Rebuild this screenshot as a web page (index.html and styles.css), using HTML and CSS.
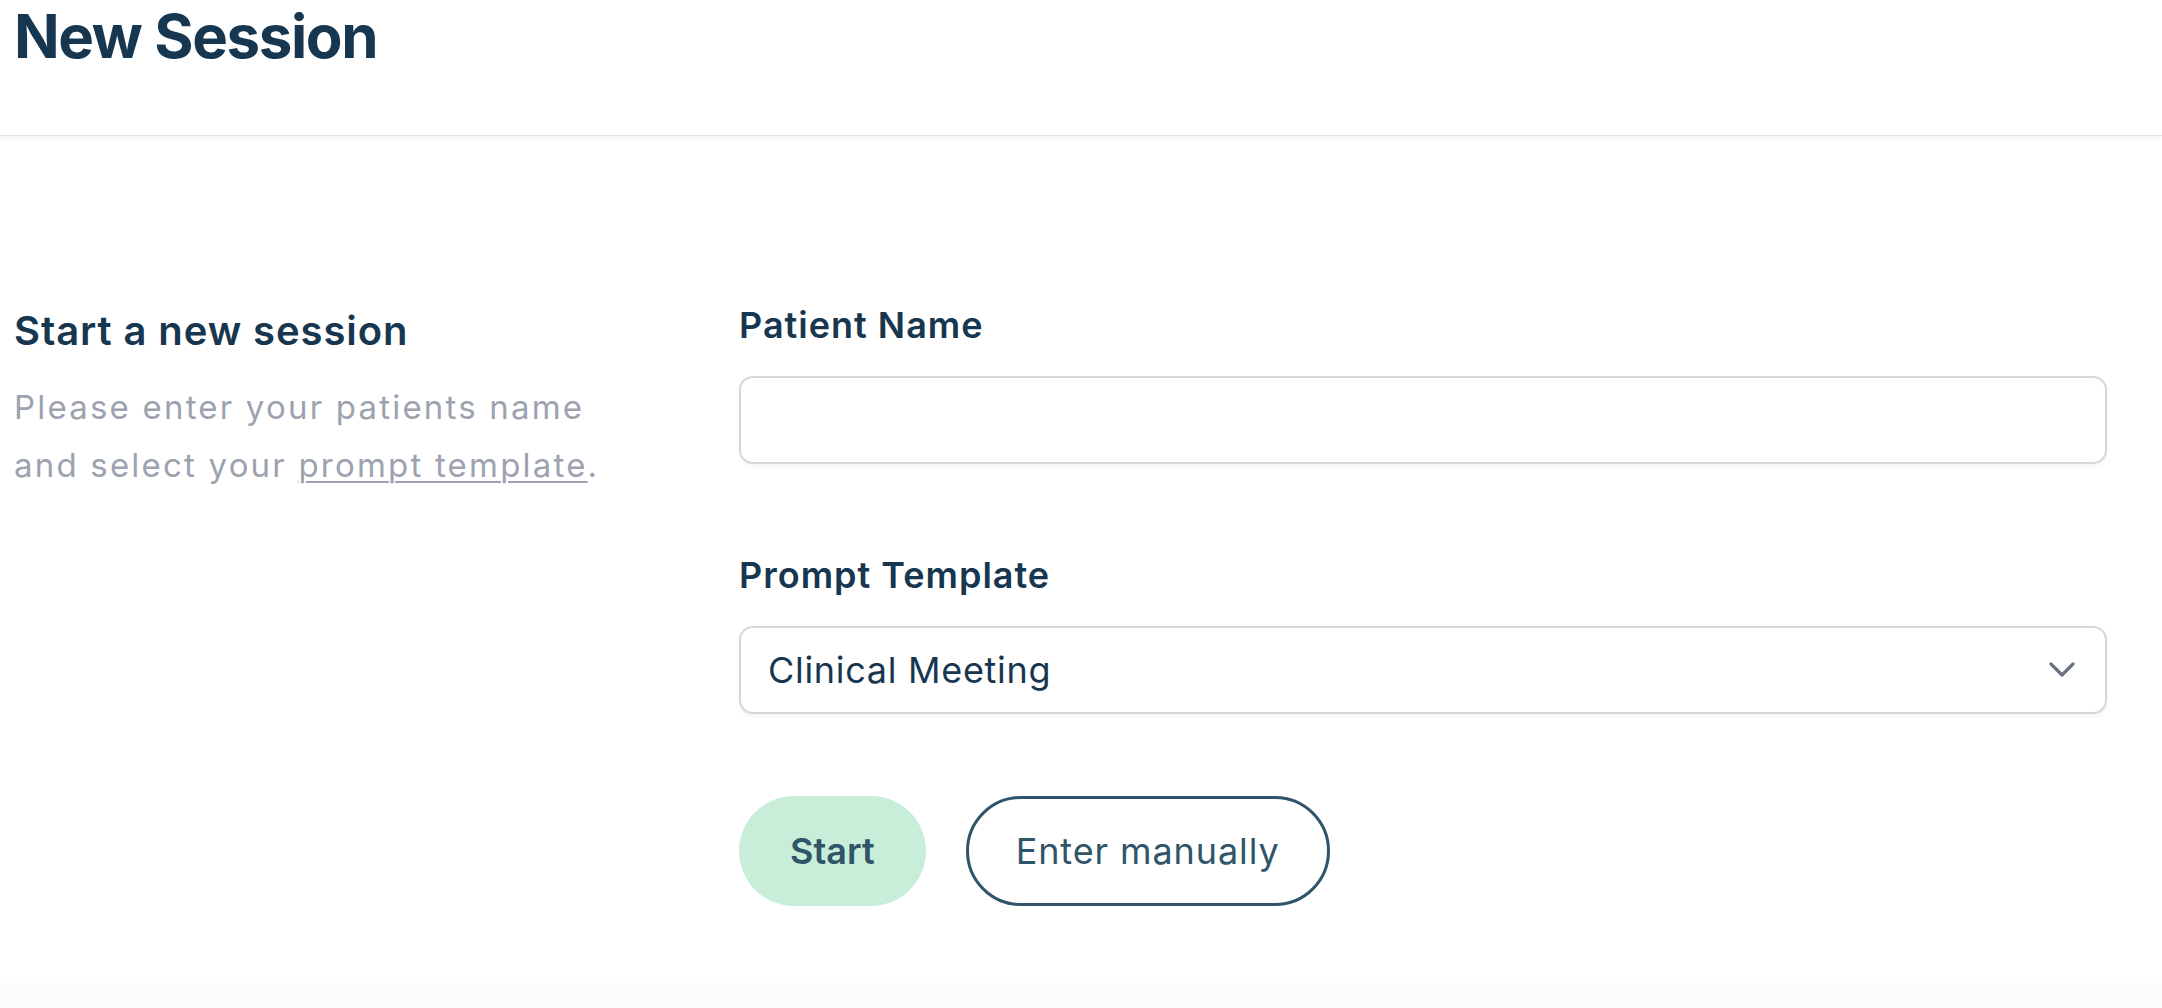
FILE: index.html
```html
<!DOCTYPE html>
<html lang="en">
<head>
  <meta charset="UTF-8">
  <meta name="viewport" content="width=device-width, initial-scale=1.0">
  <title>New Session</title>
  <link rel="stylesheet" href="styles.css">
</head>
<body>
  <header class="page-header">
    <h1>New Session</h1>
  </header>

  <main class="page-body">
    <section class="session-grid">
      <div class="intro">
        <h2>Start a new session</h2>
        <p>Please enter your patients name and select your <a href="#">prompt template</a>.</p>
      </div>

      <form class="session-form" id="session-form">
        <div class="field">
          <label for="patient-name">Patient Name</label>
          <input type="text" id="patient-name" name="patient" />
        </div>

        <div class="field">
          <label for="template">Prompt Template</label>
          <div class="select-wrap">
            <select id="template" name="template">
              <option>Clinical Meeting</option>
              <option>Follow-up</option>
              <option>Intake Assessment</option>
            </select>
            <svg class="chevron" width="26" height="16" viewBox="0 0 26 16" fill="none">
              <path d="M2 2l11 11L24 2" stroke="currentColor" stroke-width="3.2" stroke-linecap="round" stroke-linejoin="round"/>
            </svg>
          </div>
        </div>

        <div class="actions">
          <button type="submit" class="btn btn-start">Start</button>
          <button type="button" class="btn btn-outline">Enter manually</button>
        </div>
      </form>
    </section>
  </main>

  <div class="page-footer"></div>
</body>
</html>
```

FILE: styles.css
```css
body {
  margin: 0;
  font-family: Inter, 'Noto Sans', sans-serif;
  background: #fcfcfc;
  color: #17364f;
}

.page-header {
  background: white;
  padding: 0 14px 63px;
  border-bottom: 1px solid #e3e5e8;
  box-shadow: 0 2px 6px rgba(0, 0, 0, 0.06);
  position: relative;
}

.page-header h1 {
  margin: 0;
  font-size: 60px;
  line-height: 72px;
  font-weight: 700;
  letter-spacing: -1.4px;
  color: #17364f;
}

.page-body {
  background: white;
  padding: 161px 55px 77px 14px;
}

.session-grid {
  display: grid;
  grid-template-columns: 643px 1fr;
  column-gap: 82px;
}

.intro h2 {
  margin: 6px 0 0;
  font-size: 40px;
  line-height: 56px;
  font-weight: 600;
  letter-spacing: 0.9px;
}

.intro p {
  margin: 19px 0 0;
  max-width: 625px;
  font-size: 33px;
  line-height: 58px;
  letter-spacing: 2.2px;
  color: #9ca3af;
}

.intro a {
  color: #9ca3af;
  text-decoration: underline;
  text-underline-offset: 4px;
  text-decoration-thickness: 2px;
}

.session-form {
  display: flex;
  flex-direction: column;
  gap: 83px;
}

.field {
  display: flex;
  flex-direction: column;
  gap: 23px;
}

.field label {
  font-size: 36px;
  line-height: 56px;
  font-weight: 600;
  letter-spacing: 1px;
}

.field input,
.field select {
  box-sizing: border-box;
  width: 100%;
  height: 88px;
  padding: 0 27px;
  border: 2px solid #d4d7dc;
  border-radius: 14px;
  background: white;
  box-shadow: 0 2px 4px rgba(0, 0, 0, 0.05);
  font-family: inherit;
  font-size: 36px;
  letter-spacing: 0.7px;
  color: #17364f;
  outline: none;
}

.field select {
  appearance: none;
  -webkit-appearance: none;
}

.select-wrap {
  position: relative;
}

.chevron {
  position: absolute;
  right: 32px;
  top: 36px;
  color: #6b7280;
  pointer-events: none;
}

.actions {
  display: flex;
  gap: 40px;
  margin-top: -1px;
}

.btn {
  height: 110px;
  padding: 0 47px;
  border-radius: 55px;
  font-family: inherit;
  font-size: 36px;
  color: #30546a;
  cursor: pointer;
}

.btn-start {
  background: #c8eed9;
  border: none;
  font-weight: 600;
  padding: 0 51px;
}

.btn-outline {
  background: white;
  border: 3px solid #30546a;
  font-weight: 400;
  letter-spacing: 0.9px;
}

.page-footer {
  height: 40px;
  background: #fcfcfc;
}
```
